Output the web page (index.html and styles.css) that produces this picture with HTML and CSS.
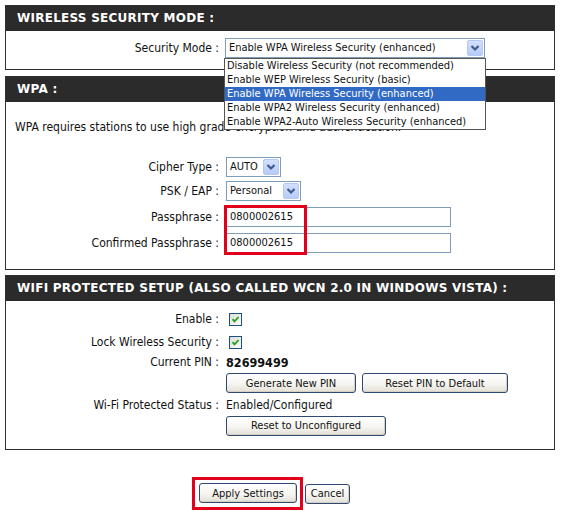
FILE: index.html
```html
<!DOCTYPE html>
<html>
<head>
<meta charset="utf-8">
<link rel="stylesheet" href="styles.css">
</head>
<body>
<div class="page">
  <section class="box">
    <h2 class="box-head">WIRELESS SECURITY MODE :</h2>
    <div class="form form-mode">
      <div class="lbl">Security Mode :</div>
      <div class="val val-mode">
        <div class="combo combo-mode">
          <span class="combo-text">Enable WPA Wireless Security (enhanced)</span>
          <span class="combo-btn"><svg width="14" height="14" viewBox="0 0 14 14"><path d="M3.5 5 L7 8.5 L10.5 5" fill="none" stroke="#3f5a8c" stroke-width="2.2"/></svg></span>
        </div>
        <ul class="dropdown">
          <li>Disable Wireless Security (not recommended)</li>
          <li>Enable WEP Wireless Security (basic)</li>
          <li class="sel">Enable WPA Wireless Security (enhanced)</li>
          <li>Enable WPA2 Wireless Security (enhanced)</li>
          <li>Enable WPA2-Auto Wireless Security (enhanced)</li>
        </ul>
      </div>
    </div>
  </section>

  <section class="box box-wpa">
    <h2 class="box-head">WPA :</h2>
    <p class="intro">WPA requires stations to use high grade encryption and authentication.</p>
    <div class="form form-wpa">
      <div class="lbl">Cipher Type :</div>
      <div class="val">
        <div class="combo combo-cipher">
          <span class="combo-text">AUTO</span>
          <span class="combo-btn"><svg width="14" height="14" viewBox="0 0 14 14"><path d="M3.5 5 L7 8.5 L10.5 5" fill="none" stroke="#3f5a8c" stroke-width="2.2"/></svg></span>
        </div>
      </div>
      <div class="lbl">PSK / EAP :</div>
      <div class="val">
        <div class="combo combo-psk">
          <span class="combo-text">Personal</span>
          <span class="combo-btn"><svg width="14" height="14" viewBox="0 0 14 14"><path d="M3.5 5 L7 8.5 L10.5 5" fill="none" stroke="#3f5a8c" stroke-width="2.2"/></svg></span>
        </div>
      </div>
      <div class="lbl">Passphrase :</div>
      <div class="val"><div class="text-input">0800002615</div></div>
      <div class="lbl">Confirmed Passphrase :</div>
      <div class="val"><div class="text-input">0800002615</div></div>
    </div>
    <div class="mark mark-pass"></div>
  </section>

  <section class="box">
    <h2 class="box-head">WIFI PROTECTED SETUP (ALSO CALLED WCN 2.0 IN WINDOWS VISTA) :</h2>
    <div class="form form-wps">
      <div class="lbl">Enable :</div>
      <div class="val"><span class="check"><svg width="11" height="11" viewBox="0 0 11 11"><path d="M2.5 5.2 L4.5 7.4 L8.6 3" fill="none" stroke="#21a121" stroke-width="1.8"/></svg></span></div>
      <div class="lbl">Lock Wireless Security :</div>
      <div class="val"><span class="check"><svg width="11" height="11" viewBox="0 0 11 11"><path d="M2.5 5.2 L4.5 7.4 L8.6 3" fill="none" stroke="#21a121" stroke-width="1.8"/></svg></span></div>
      <div class="lbl">Current PIN :</div>
      <div class="val"><b class="pin">82699499</b></div>
      <div class="lbl"></div>
      <div class="val btn-row">
        <button class="btn btn-gen">Generate New PIN</button>
        <button class="btn btn-def">Reset PIN to Default</button>
      </div>
      <div class="lbl">Wi-Fi Protected Status :</div>
      <div class="val">Enabled/Configured</div>
      <div class="lbl"></div>
      <div class="val"><button class="btn btn-unconf">Reset to Unconfigured</button></div>
    </div>
  </section>

  <div class="actions">
    <span class="mark-apply"><button class="btn btn-apply">Apply Settings</button></span>
    <button class="btn btn-cancel">Cancel</button>
  </div>
</div>
</body>
</html>
```
FILE: styles.css
```css
* { box-sizing: border-box; }
html, body { margin: 0; padding: 0; background: #fff; }
body {
  font-family: "DejaVu Sans Condensed", "Liberation Sans", sans-serif;
  font-size: 12px;
  color: #111;
}
.page { padding: 5px 0 0 5px; width: 555px; }

.box {
  position: relative;
  border: 1px solid #2f2f2f;
  margin-bottom: 6px;
}
.box-wpa { margin-bottom: 5px; }
.box-head {
  margin: 0;
  height: 25px;
  background: #2b2b2b;
  color: #fff;
  font-family: "DejaVu Sans", sans-serif;
  font-weight: bold;
  font-size: 12px;
  letter-spacing: 0.25px;
  line-height: 25px;
  padding-left: 11px;
}

.form {
  display: grid;
  grid-template-columns: 213px 1fr;
  column-gap: 7px;
  align-items: center;
}
.lbl { text-align: right; white-space: nowrap; }
.val { position: relative; white-space: nowrap; }

.form-mode { padding: 7px 0 11px; grid-template-rows: 20px; }
.val-mode { margin-left: -1px; }

.intro { margin: 0; padding: 18px 0 0 9px; line-height: 14px; }
.form-wpa { margin-top: 21px; padding-bottom: 14px; grid-template-rows: 24px 23px 29px 24px; }
.form-wps { padding: 6px 0 12px; grid-template-rows: 23px 24px 16px 26px 18px 23px; }

.combo {
  display: flex;
  align-items: center;
  height: 20px;
  border: 1px solid #7f9db9;
  background: #fff;
  padding-left: 3px;
  font-size: 11px;
}
.combo-text { flex: 1; line-height: 18px; }
.combo-btn {
  width: 16px;
  height: 16px;
  margin-right: 1px;
  border: 1px solid #b3c8f2;
  border-radius: 2px;
  background: linear-gradient(#d2e0fd, #b6cbf6);
  display: flex;
  align-items: center;
  justify-content: center;
}
.combo-mode { width: 260px; }
.combo-cipher { width: 55px; }
.combo-psk { width: 75px; }

.dropdown {
  position: absolute;
  top: 20px;
  left: -1px;
  width: 262px;
  margin: 0;
  padding: 0;
  list-style: none;
  border: 1px solid #555;
  background: #fff;
  z-index: 2;
  font-size: 11px;
}
.dropdown li { height: 14px; line-height: 14px; padding-left: 2px; }
.dropdown li.sel { background: #316ac5; color: #fff; }

.text-input {
  width: 225px;
  height: 20px;
  border: 1px solid #7f9db9;
  padding-left: 3px;
  line-height: 18px;
  font-size: 11px;
}

.mark {
  position: absolute;
  border: 3px solid #e3001b;
}
.mark-pass { left: 218px; top: 128px; width: 83px; height: 50px; }

.check {
  display: inline-flex;
  align-items: center;
  justify-content: center;
  width: 13px;
  height: 13px;
  margin-left: 3px;
  border: 1px solid #1c5180;
  background: linear-gradient(135deg, #dcdcd7, #fbfbfa);
  vertical-align: middle;
}
.pin { font-weight: bold; font-size: 12.5px; }

.btn {
  font-family: inherit;
  font-size: 11px;
  color: #111;
  height: 20px;
  padding: 0;
  border: 1px solid #2e4a72;
  border-radius: 3px;
  background: linear-gradient(#ffffff 0%, #f6f5f1 55%, #e2dfd6 100%);
  box-shadow: inset -1px -1px 0 #d6d0c3;
}
.btn-row { display: flex; gap: 6px; }
.btn-gen { width: 130px; }
.btn-def { width: 146px; }
.btn-unconf { width: 160px; }

.actions {
  display: flex;
  align-items: center;
  gap: 2px;
  margin-top: 27px;
  padding-left: 187px;
}
.mark-apply {
  display: inline-block;
  border: 3px solid #e3001b;
  padding: 3px 3px 4px 4px;
}
.btn-apply { width: 98px; display: block; }
.btn-cancel { width: 45px; }
```
